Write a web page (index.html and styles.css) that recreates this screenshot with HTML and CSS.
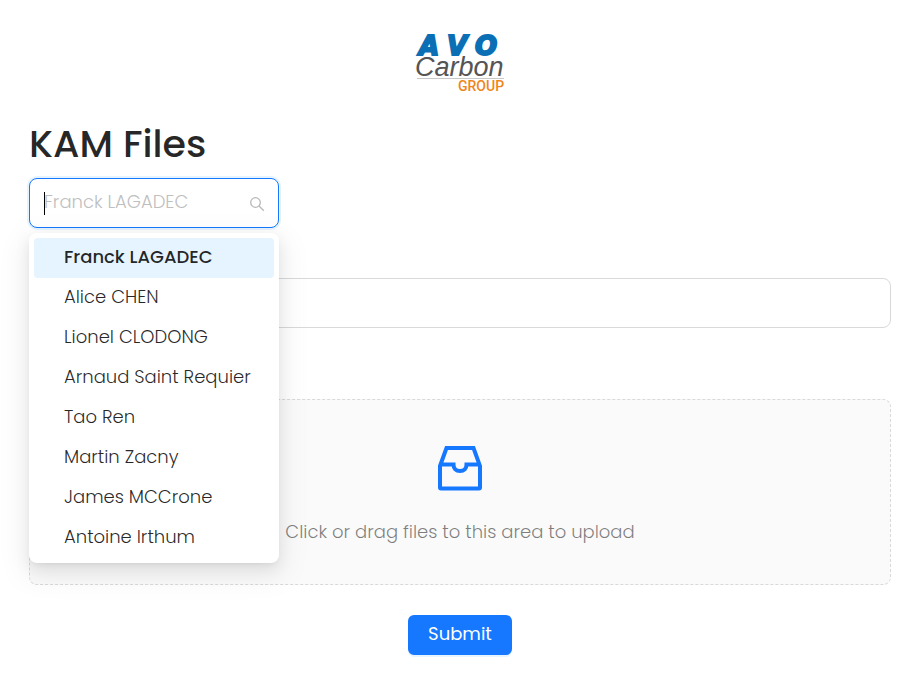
FILE: index.html
```html
<!DOCTYPE html>
<html lang="en">
<head>
<meta charset="utf-8">
<meta name="viewport" content="width=device-width, initial-scale=1">
<title>KAM Files</title>
<link rel="stylesheet" href="styles.css">
</head>
<body>
<main class="page">
  <header class="brand">
    <svg class="logo" viewBox="0 0 90 60" role="img" aria-label="AVO Carbon Group">
      <g class="logo-avo">
        <text x="4" y="20">A</text>
        <text x="32" y="20">V</text>
        <text x="60" y="20">O</text>
      </g>
      <text class="logo-carbon" x="0" y="41">Carbon</text>
      <path class="logo-rule" d="M2 43.500H89"/>
      <text class="logo-group" x="43" y="56">GROUP</text>
    </svg>
  </header>
  <h1 class="title">KAM Files</h1>
  <form class="form">
    <div class="select">
      <input class="select-input" type="text" role="combobox" aria-label="KAM" aria-expanded="true" aria-controls="kam-list" placeholder="Franck LAGADEC">
      <svg class="select-icon" viewBox="0 0 16 16" aria-hidden="true"><circle cx="6.500" cy="6.500" r="4.800"/><path d="M10 10l4.800 4.800"/></svg>
      <ul class="menu" id="kam-list" role="listbox" aria-label="KAM">
        <li class="option option-selected" role="option" aria-selected="true">Franck LAGADEC</li>
        <li class="option" role="option">Alice CHEN</li>
        <li class="option" role="option">Lionel CLODONG</li>
        <li class="option" role="option">Arnaud Saint Requier</li>
        <li class="option" role="option">Tao Ren</li>
        <li class="option" role="option">Martin Zacny</li>
        <li class="option" role="option">James MCCrone</li>
        <li class="option" role="option">Antoine Irthum</li>
      </ul>
    </div>
    <input class="field" type="text" aria-label="Name">
    <button class="dropzone" type="button">
      <svg class="inbox" viewBox="0 0 48 48" aria-hidden="true"><path d="M4 22L10.500 4h27L44 22v21.500a1 1 0 0 1-1 1H5a1 1 0 0 1-1-1zM4 20.500h13.500c0 4 2.500 6.500 6.500 6.500s6.500-2.500 6.500-6.500H44"/></svg>
      <span>Click or drag files to this area to upload</span>
    </button>
    <button class="submit" type="submit">Submit</button>
  </form>
</main>
</body>
</html>
```
FILE: styles.css
```css
* {
  box-sizing: border-box;
}

body {
  margin: 0;
  background: #fff;
  color: rgba(0, 0, 0, 0.85);
  font-family: Poppins, Inter, sans-serif;
  font-size: 18px;
  font-weight: 300;
}

.page {
  padding: 35px 20px 18px 29px;
}

.brand {
  display: flex;
  justify-content: center;
}

.logo {
  width: 90px;
  height: 60px;
  overflow: visible;
}

.logo-avo {
  fill: #0a6fb5;
  stroke: #0a6fb5;
  stroke-width: 2;
  font: italic 700 26px "DejaVu Sans", sans-serif;
}

.logo-carbon {
  fill: #555;
  font: italic 400 27px "Liberation Sans", sans-serif;
}

.logo-rule {
  stroke: #c8c8c8;
}

.logo-group {
  fill: #f08519;
  font: 500 14px Roboto, sans-serif;
}

.title {
  margin: 20px 0 5px;
  font-size: 38px;
  font-weight: 500;
  line-height: 58px;
}

.form {
  display: flex;
  flex-direction: column;
}

.select {
  position: relative;
  width: 250px;
  margin-bottom: 50px;
}

.select-input,
.field {
  display: block;
  width: 100%;
  height: 50px;
  border: 1px solid #d9d9d9;
  border-radius: 8px;
  background: #fff;
  font: inherit;
  outline: none;
}

.select-input {
  padding: 0 40px 3px 14px;
  border-color: #1677ff;
  box-shadow: 0 0 0 2px #e6f4ff;
}

.select-input::placeholder {
  color: #bfbfbf;
  opacity: 1;
}

.select::before {
  content: "";
  position: absolute;
  top: 14px;
  left: 15px;
  width: 1px;
  height: 23px;
  background: #000;
}

.select-icon {
  position: absolute;
  top: 18px;
  right: 14px;
  width: 16px;
  height: 16px;
  fill: none;
  stroke: #b8b8b8;
  stroke-width: 1.3;
}

.menu {
  position: absolute;
  z-index: 1;
  top: 55px;
  left: 0;
  width: 100%;
  margin: 0;
  padding: 5px;
  border-radius: 8px;
  background: #fff;
  box-shadow: 0 6px 16px rgba(0, 0, 0, 0.08), 0 3px 6px -4px rgba(0, 0, 0, 0.12), 0 9px 28px 8px rgba(0, 0, 0, 0.05);
  list-style: none;
}

.option {
  padding: 0 8px 2px 30px;
  border-radius: 4px;
  line-height: 38px;
  white-space: nowrap;
}

.option-selected {
  background: #e6f4ff;
  font-weight: 500;
}

.field {
  margin-bottom: 71px;
  padding: 0 14px;
}

.dropzone {
  display: flex;
  flex-direction: column;
  align-items: center;
  gap: 27px;
  padding: 44px 16px 39px;
  border: 1px dashed #d9d9d9;
  border-radius: 8px;
  background: #fafafa;
  color: rgba(0, 0, 0, 0.5);
  font: inherit;
  line-height: 26px;
}

.inbox {
  width: 48px;
  height: 48px;
  fill: none;
  stroke: #1677ff;
  stroke-width: 4;
}

.submit {
  align-self: center;
  height: 40px;
  margin-top: 30px;
  padding: 0 20px 3px;
  border: 0;
  border-radius: 6px;
  background: #1677ff;
  box-shadow: 0 2px 0 rgba(5, 145, 255, 0.1);
  color: #fff;
  font: inherit;
  font-weight: 400;
}
```
